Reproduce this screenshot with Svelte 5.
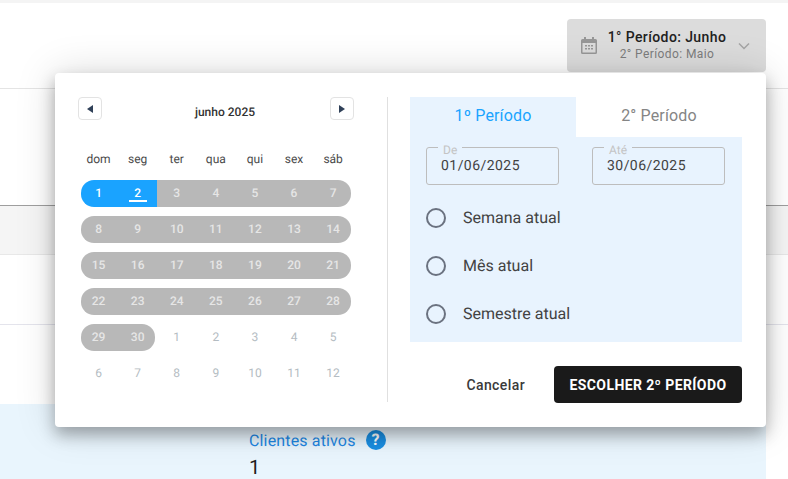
<script>
  const weekdays = ['dom', 'seg', 'ter', 'qua', 'qui', 'sex', 'sáb'];

  // dias do calendário, 6 linhas
  const days = [];
  for (let d = 1; d <= 30; d++) days.push({ n: d, inMonth: true });
  for (let d = 1; d <= 12; d++) days.push({ n: d, inMonth: false });
  const weeks = [];
  for (let i = 0; i < days.length; i += 7) weeks.push(days.slice(i, i + 7));

  const shortcuts = ['Semana atual', 'Mês atual', 'Semestre atual'];
</script>

<div class="page">
  <div class="top-strip"></div>
  <header class="toolbar">
    <button class="trigger">
      <svg class="cal-icon" viewBox="0 0 16 17" width="16" height="17">
        <path d="M3 0h2v2h6V0h2v2h1.500A1.500 1.500 0 0 1 16 3.500v12a1.500 1.500 0 0 1-1.500 1.500h-13A1.500 1.500 0 0 1 0 15.500v-12A1.500 1.500 0 0 1 1.500 2H3z" fill="#979797" />
        <rect x="1.500" y="6" width="13" height="9.500" fill="#dcdcdc" />
        <path d="M4 8h2v1.500H4zM7 8h2v1.500H7zM10 8h2v1.500h-2zM4 11h2v1.500H4zM7 11h2v1.500H7zM10 11h2v1.500h-2z" fill="#979797" />
      </svg>
      <span class="trigger-text">
        <strong>1° Período: Junho</strong>
        <small>2° Período: Maio</small>
      </span>
      <svg class="chevron" viewBox="0 0 12 8" width="12" height="8">
        <path d="M1 1.500l5 5 5-5" fill="none" stroke="#a5a5a5" stroke-width="1.500" />
      </svg>
    </button>
  </header>
  <div class="section-top"></div>
  <div class="table-head"></div>
  <div class="table-row"></div>
  <div class="table-row"></div>
  <div class="summary">
    <div class="metric">
      <div class="metric-title">
        Clientes ativos
        <span class="help">?</span>
      </div>
      <div class="metric-value">1</div>
    </div>
  </div>

  <div class="popover">
    <div class="calendar">
      <div class="cal-head">
        <button class="nav" aria-label="Anterior">
          <svg viewBox="0 0 6 8" width="6" height="8"><path d="M6 0v8L0 4z" fill="#2f4058" /></svg>
        </button>
        <span class="month">junho 2025</span>
        <button class="nav" aria-label="Próximo">
          <svg viewBox="0 0 6 8" width="6" height="8"><path d="M0 0v8l6-4z" fill="#2f4058" /></svg>
        </button>
      </div>
      <div class="weekdays">
        {#each weekdays as w}
          <span>{w}</span>
        {/each}
      </div>
      {#each weeks as week}
        <div class="week">
          {#each week as day, di}
            <span
              class="day"
              class:in-month={day.inMonth}
              class:selected={day.inMonth && day.n <= 2}
              class:first={day.inMonth && di === 0}
              class:last={day.inMonth && (di === 6 || day.n === 30)}
            >
              <span class:today={day.inMonth && day.n === 2}>{day.n}</span>
            </span>
          {/each}
        </div>
      {/each}
    </div>

    <div class="side">
      <div class="tabs">
        <button class="tab active">1º Período</button>
        <button class="tab">2° Período</button>
      </div>
      <div class="tab-body">
        <div class="fields">
          <fieldset>
            <legend>De</legend>
            <span>01/06/2025</span>
          </fieldset>
          <fieldset>
            <legend>Até</legend>
            <span>30/06/2025</span>
          </fieldset>
        </div>
        <ul class="shortcuts">
          {#each shortcuts as s}
            <li><span class="radio"></span>{s}</li>
          {/each}
        </ul>
      </div>
      <div class="actions">
        <button class="cancel">Cancelar</button>
        <button class="confirm">ESCOLHER 2º PERÍODO</button>
      </div>
    </div>
  </div>
</div>

<style>
  :global(body) {
    margin: 0;
    background: #fff;
    font-family: Roboto, "Liberation Sans", sans-serif;
    text-rendering: geometricPrecision;
  }
  button {
    font-family: inherit;
    border: 0;
    background: none;
    padding: 0;
  }
  .page {
    position: relative;
    height: 479px;
    overflow: hidden;
  }
  .page > div,
  .toolbar {
    box-sizing: border-box;
  }
  .top-strip {
    height: 3px;
    background: #f4f4f4;
  }
  .toolbar {
    display: flex;
    justify-content: flex-end;
    height: 86px;
    padding: 16px 22px 0 0;
    border-bottom: 1px solid #e4e4e4;
  }
  .trigger {
    display: flex;
    align-items: center;
    width: 199px;
    height: 53px;
    padding: 0 16px 0 14px;
    box-sizing: border-box;
    background: #dcdcdc;
    border-radius: 4px;
  }
  .cal-icon {
    flex: none;
  }
  .trigger-text {
    flex: 1;
    display: flex;
    flex-direction: column;
    align-items: center;
    line-height: 17px;
    padding-right: 1px;
    letter-spacing: 0.4px;
  }
  .trigger-text strong {
    font-size: 14px;
    font-weight: 500;
    color: #212121;
  }
  .trigger-text small {
    font-size: 12px;
    color: #7d7d7d;
  }
  .section-top {
    height: 117px;
    border-bottom: 1px solid #9e9e9e;
  }
  .table-head {
    height: 49px;
    background: #f5f5f5;
    border-bottom: 1px solid #e8e8e8;
  }
  .table-row {
    height: 70px;
    border-bottom: 1px solid #e4e4ec;
  }
  .table-row:nth-child(6) {
    height: 79px;
    border-bottom: 0;
  }
  .summary {
    width: 766px;
    height: 75px;
    background: #e9f5fd;
    padding-left: 249px;
  }
  .metric {
    padding-top: 25px;
  }
  .metric-title {
    display: flex;
    align-items: center;
    gap: 10px;
    height: 22px;
    font-size: 16px;
    letter-spacing: 0.15px;
    color: #1e88e5;
  }
  .help {
    width: 20px;
    height: 20px;
    border-radius: 50%;
    background: #1a8fe3;
    color: #fff;
    font-size: 16px;
    font-weight: 700;
    line-height: 20px;
    text-align: center;
  }
  .metric-value {
    margin-top: 4px;
    font-size: 20px;
    line-height: 24px;
    color: #212121;
  }

  .popover {
    position: absolute;
    left: 55px;
    top: 73px;
    width: 711px;
    height: 354px;
    display: flex;
    padding: 24px 24px 24px 23px;
    box-sizing: border-box;
    background: #fff;
    border-radius: 4px;
    box-shadow: 0 8px 16px rgba(0, 0, 0, 0.3), 0 0 40px rgba(0, 0, 0, 0.15);
  }
  .calendar {
    width: 310px;
    height: 305px;
    box-sizing: border-box;
    padding-right: 33px;
    border-right: 1px solid #e0e0e0;
  }
  .cal-head {
    display: flex;
    align-items: center;
    justify-content: space-between;
    height: 23px;
  }
  .nav {
    display: flex;
    align-items: center;
    justify-content: center;
    width: 24px;
    height: 23px;
    box-sizing: border-box;
    border: 1px solid #e3e3e3;
    border-radius: 4px;
    background: #fff;
  }
  .month {
    position: relative;
    top: 3px;
    left: 9px;
    font-size: 12px;
    font-weight: 500;
    color: #333;
  }
  .weekdays,
  .week {
    display: grid;
    grid-template-columns: repeat(7, 39.1px);
    margin-left: 1px;
  }
  .weekdays {
    margin-top: 30px;
    height: 30px;
    font-size: 12px;
    line-height: 18px;
    color: #4a4a4a;
    text-align: center;
  }
  .week {
    height: 26px;
    margin-bottom: 10px;
    font-size: 12px;
    line-height: 27px;
    text-align: center;
  }
  .day {
    color: #b4bcc2;
  }
  .day.in-month {
    font-weight: 500;
    background: #b8b8b8;
    color: #e6e6e6;
  }
  .day.selected {
    background: #1aa3ff;
    color: #fff;
  }
  .day.first {
    margin-left: 2px;
    padding-right: 2px;
    border-radius: 13px 0 0 13px;
  }
  .day.last {
    margin-right: 2px;
    padding-left: 2px;
    border-radius: 0 13px 13px 0;
  }
  .today {
    display: inline-block;
    vertical-align: top;
    width: 18px;
    padding-top: 6px;
    line-height: 14px;
    border-bottom: 2px solid #fff;
  }

  .side {
    flex: 1;
    padding-left: 22px;
  }
  .tabs {
    display: flex;
    height: 40px;
  }
  .tab {
    width: 166px;
    padding-bottom: 4px;
    font-size: 16px;
    letter-spacing: 0.15px;
    color: #858585;
  }
  .tab.active {
    background: #e8f3fe;
    color: #1aa3ff;
  }
  .tab-body {
    height: 205px;
    background: #e8f3fe;
    padding: 4px 17px 0 16px;
    box-sizing: border-box;
  }
  .fields {
    display: flex;
    justify-content: space-between;
  }
  fieldset {
    width: 133px;
    height: 44px;
    margin: 0;
    padding: 4px 14px 0;
    box-sizing: border-box;
    border: 1px solid #bdbdbd;
    border-radius: 3px;
    font-size: 14px;
    letter-spacing: 0.45px;
    line-height: 18px;
    color: #424242;
  }
  legend {
    position: relative;
    top: 3px;
    margin-left: -3px;
    padding: 0 5px;
    font-size: 12px;
    line-height: 12px;
    letter-spacing: 0;
    color: #c4c4c4;
  }
  .shortcuts {
    list-style: none;
    margin: 8px 0 0;
    padding: 0;
  }
  .shortcuts li {
    display: flex;
    align-items: center;
    gap: 17px;
    height: 48px;
    font-size: 16px;
    color: #424242;
  }
  .radio {
    width: 20px;
    height: 20px;
    margin-top: 2px;
    box-sizing: border-box;
    border: 2px solid #6b7280;
    border-radius: 50%;
  }
  .actions {
    display: flex;
    justify-content: flex-end;
    align-items: center;
    gap: 29px;
    margin-top: 24px;
  }
  .cancel {
    font-size: 14px;
    font-weight: 500;
    letter-spacing: 0.4px;
    color: #3a3a3a;
  }
  .confirm {
    width: 188px;
    height: 37px;
    background: #1a1a1a;
    border-radius: 4px;
    color: #fff;
    font-size: 14px;
    font-weight: 700;
    letter-spacing: 0.4px;
  }
</style>
